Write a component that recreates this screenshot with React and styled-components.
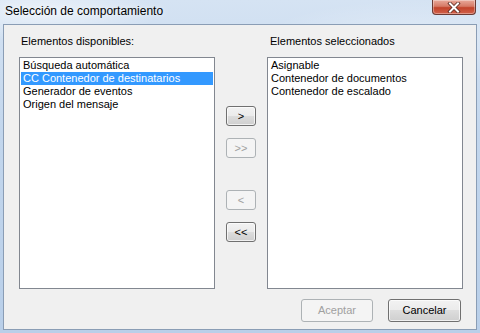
import styled, { createGlobalStyle } from 'styled-components';

const GlobalStyle = createGlobalStyle`
    html, body {
        margin: 0;
        padding: 0;
        width: 480px;
        height: 333px;
        overflow: hidden;
        background: #bfd3ea;
    }

    * {
        box-sizing: border-box;
    }
`

const Window = styled.div`
    width: 480px;
    height: 333px;
    display: flex;
    flex-direction: column;
    padding: 0 3px 3px 3px;
    font-family: "Liberation Sans", Arial, sans-serif;
    background:
        radial-gradient(ellipse 120px 30px at 40px 12px, rgba(255,255,255,0.55), transparent),
        radial-gradient(ellipse 160px 40px at 420px 40px, rgba(255,255,255,0.35), transparent),
        linear-gradient(180deg, #d5e3f3 0%, #c2d6ed 40%, #b9cfe9 100%);
`

const TitleBar = styled.div`
    height: 24px;
    display: flex;
    align-items: flex-start;
    justify-content: space-between;
`

const Title = styled.span`
    margin: 4px 0 0 2px;
    font-size: 12px;
    color: #000;
    text-shadow: 0 0 6px rgba(255,255,255,0.9);
`

const CloseButton = styled.div`
    width: 44px;
    height: 15px;
    margin-right: 1px;
    display: flex;
    align-items: center;
    justify-content: center;
    border: 1px solid #6b3a34;
    border-top: none;
    border-radius: 0 0 4px 4px;
    background: linear-gradient(180deg, #e9a99b 0%, #d67a66 45%, #c2432b 55%, #d1614a 100%);
    box-shadow: inset 0 0 0 1px rgba(255,255,255,0.35);
`

const Client = styled.div`
    flex: 1;
    display: flex;
    flex-direction: column;
    background: #f0f0f0;
    border: 1px solid #8a9db5;
    padding: 10px 13px 0 15px;
`

const Columns = styled.div`
    display: grid;
    grid-template-columns: 196px 52px 196px;
`

const Column = styled.div`
    display: flex;
    flex-direction: column;
`

const Label = styled.div`
    height: 22px;
    padding-left: ${({ indent }) => indent}px;
    font-size: 11px;
    line-height: 13px;
    color: #000;
`

const ListBox = styled.div`
    height: 232px;
    background: #fff;
    border: 1px solid #828790;
    padding: 1px;
`

const Item = styled.div`
    height: 13px;
    padding-left: 2px;
    font-size: 11px;
    line-height: 13px;
    white-space: nowrap;
    color: ${({ selected }) => (selected ? '#fff' : '#000')};
    background: ${({ selected }) => (selected ? '#3399ff' : 'transparent')};
`

const Middle = styled.div`
    display: flex;
    flex-direction: column;
    align-items: center;
    padding-top: 71px;
`

const Button = styled.button`
    width: ${({ w }) => w}px;
    height: ${({ h }) => h}px;
    margin-top: ${({ gap }) => gap || 0}px;
    padding: 0;
    font-family: "Liberation Sans", Arial, sans-serif;
    font-size: 11px;
    line-height: 1;
    border-radius: 3px;
    border: 1px solid ${({ disabled }) => (disabled ? '#adb2b5' : '#707070')};
    color: ${({ disabled }) => (disabled ? '#a0a0a0' : '#000')};
    background: ${({ disabled }) => (disabled
        ? '#f4f4f4'
        : 'linear-gradient(180deg, #f2f2f2 0%, #ebebeb 50%, #dddddd 50%, #cfcfcf 100%)')};
    box-shadow: inset 0 0 0 1px ${({ disabled }) => (disabled ? '#f4f4f4' : 'rgba(255,255,255,0.7)')};
`

const Footer = styled.div`
    display: flex;
    justify-content: flex-end;
    gap: 15px;
    margin-top: 10px;
    padding-right: 2px;
`

const disponibles = [
    'Búsqueda automática',
    'CC Contenedor de destinatarios',
    'Generador de eventos',
    'Origen del mensaje',
];

const seleccionados = [
    'Asignable',
    'Contenedor de documentos',
    'Contenedor de escalado',
];

const CloseIcon = () => (
    <svg width="14" height="11" viewBox="0 0 14 11">
        <path d="M3 1.5 L11 9.5 M11 1.5 L3 9.5" stroke="#5a2a22" strokeWidth="3.6" strokeLinecap="square" />
        <path d="M3 1.5 L11 9.5 M11 1.5 L3 9.5" stroke="#fff" strokeWidth="2" strokeLinecap="square" />
    </svg>
);

const App = () => {
    return (
        <Window>
            <GlobalStyle />
            <TitleBar>
                <Title>Selección de comportamiento</Title>
                <CloseButton>
                    <CloseIcon />
                </CloseButton>
            </TitleBar>
            <Client>
                <Columns>
                    <Column>
                        <Label indent={2}>Elementos disponibles:</Label>
                        <ListBox>
                            {disponibles.map((item, i) => (
                                <Item key={item} selected={i === 1}>{item}</Item>
                            ))}
                        </ListBox>
                    </Column>
                    <Middle>
                        <Button w={30} h={20}>&gt;</Button>
                        <Button w={30} h={20} gap={12} disabled>&gt;&gt;</Button>
                        <Button w={30} h={20} gap={32} disabled>&lt;</Button>
                        <Button w={30} h={20} gap={12}>&lt;&lt;</Button>
                    </Middle>
                    <Column>
                        <Label indent={3}>Elementos seleccionados</Label>
                        <ListBox>
                            {seleccionados.map(item => (
                                <Item key={item}>{item}</Item>
                            ))}
                        </ListBox>
                    </Column>
                </Columns>
                <Footer>
                    <Button w={72} h={23} disabled>Aceptar</Button>
                    <Button w={73} h={23}>Cancelar</Button>
                </Footer>
            </Client>
        </Window>
    );
}

export default App;
